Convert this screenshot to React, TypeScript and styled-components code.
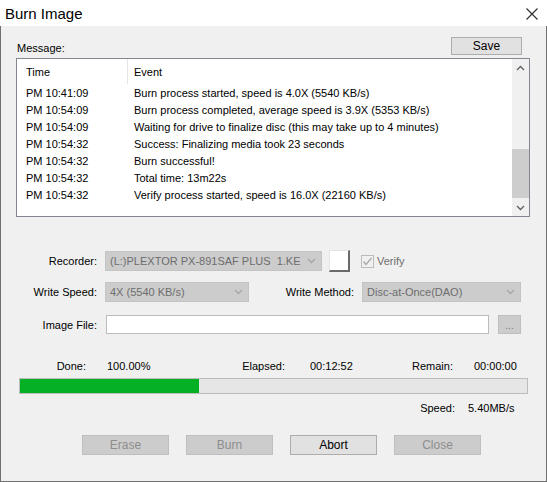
import * as React from 'react';
import styled, { createGlobalStyle } from 'styled-components';

const GlobalStyle = createGlobalStyle`
    html, body {
        margin: 0;
        padding: 0;
        background: #ffffff;
    }
    body {
        font-family: "Liberation Sans", Arial, sans-serif;
        font-size: 11px;
        color: #000;
    }
`;

const logRows = [
    ['PM 10:41:09', 'Burn process started, speed is 4.0X (5540 KB/s)'],
    ['PM 10:54:09', 'Burn process completed, average speed is 3.9X (5353 KB/s)'],
    ['PM 10:54:09', 'Waiting for drive to finalize disc (this may take up to 4 minutes)'],
    ['PM 10:54:32', 'Success: Finalizing media took 23 seconds'],
    ['PM 10:54:32', 'Burn successful!'],
    ['PM 10:54:32', 'Total time: 13m22s'],
    ['PM 10:54:32', 'Verify process started, speed is 16.0X (22160 KB/s)'],
];

const Chevron = ({ up, color }: { up?: boolean; color: string }) => (
    <svg width="9" height="6" viewBox="0 0 9 6">
        <polyline
            points={up ? '1,5 4.5,1.5 8,5' : '1,1 4.5,4.5 8,1'}
            fill="none"
            stroke={color}
            strokeWidth="1.3"
        />
    </svg>
);

const Select = ({ value, width }: { value: string; width: number }) => (
    <SelectBox $width={width}>
        <span>{value}</span>
        <Chevron color="#a6a6a6" />
    </SelectBox>
);

export default function App() {
    const progress = 0.353;
    return (
        <>
            <GlobalStyle />
            <Window>
                <TitleBar>
                    <Title>Burn Image</Title>
                    <CloseIcon width="12" height="12" viewBox="0 0 12 12">
                        <path d="M0.5 0.5 L11.5 11.5 M11.5 0.5 L0.5 11.5" stroke="#2b2b2b" strokeWidth="1.1" />
                    </CloseIcon>
                </TitleBar>
                <Body>
                    <MessageHeader>
                        <span>Message:</span>
                        <Button>Save</Button>
                    </MessageHeader>
                    <ListBox>
                        <Table>
                            <HeaderRow>
                                <TimeCell $header>Time</TimeCell>
                                <EventCell>Event</EventCell>
                            </HeaderRow>
                            {logRows.map(([time, event], i) => (
                                <Row key={i}>
                                    <TimeCell>{time}</TimeCell>
                                    <EventCell>{event}</EventCell>
                                </Row>
                            ))}
                        </Table>
                        <ScrollBar>
                            <ScrollButton><Chevron up color="#606060" /></ScrollButton>
                            <Track>
                                <Thumb $offset={73} $size={49} />
                            </Track>
                            <ScrollButton><Chevron color="#606060" /></ScrollButton>
                        </ScrollBar>
                    </ListBox>

                    <FormRow $top={33} $height={22}>
                        <Label $width={81}>Recorder:</Label>
                        <Select value="(L:)PLEXTOR PX-891SAF PLUS  1.KE" width={217} />
                        <ColorButton />
                        <CheckWrap>
                            <CheckBox>
                                <svg width="11" height="11" viewBox="0 0 11 11">
                                    <polyline points="1.5,5.5 4,8.5 9.5,2" fill="none" stroke="#a8a8a8" strokeWidth="1.3" />
                                </svg>
                            </CheckBox>
                            <DisabledText>Verify</DisabledText>
                        </CheckWrap>
                    </FormRow>
                    <FormRow $top={10} $height={20}>
                        <Label $width={81}>Write Speed:</Label>
                        <Select value="4X (5540 KB/s)" width={144} />
                        <Label $width={98}>Write Method:</Label>
                        <Select value="Disc-at-Once(DAO)" width={159} />
                    </FormRow>
                    <FormRow $top={13} $height={19}>
                        <Label $width={81}>Image File:</Label>
                        <TextInput />
                        <BrowseButton>...</BrowseButton>
                    </FormRow>

                    <StatRow $top={25}>
                        <StatLabel $width={70}>Done:</StatLabel>
                        <StatValue $width={114} $pad={21}>100.00%</StatValue>
                        <StatLabel $width={85}>Elapsed:</StatLabel>
                        <StatValue $width={105} $pad={25}>00:12:52</StatValue>
                        <StatLabel $width={63}>Remain:</StatLabel>
                        <StatValue $width={70} $pad={21}>00:00:00</StatValue>
                    </StatRow>
                    <ProgressBar>
                        <ProgressFill style={{ width: `${progress * 100}%` }} />
                    </ProgressBar>
                    <StatRow $top={7}>
                        <StatLabel $width={439}>Speed:</StatLabel>
                        <StatValue $width={70} $pad={13}>5.40MB/s</StatValue>
                    </StatRow>

                    <ButtonRow>
                        <ActionButton disabled>Erase</ActionButton>
                        <ActionButton disabled>Burn</ActionButton>
                        <ActionButton>Abort</ActionButton>
                        <ActionButton disabled>Close</ActionButton>
                    </ButtonRow>
                </Body>
            </Window>
        </>
    );
}

const Window = styled.div`
    width: 547px;
    height: 482px;
    display: flex;
    flex-direction: column;
    background: #ffffff;
`;

const TitleBar = styled.div`
    height: 26px;
    flex: none;
    display: flex;
    align-items: center;
    justify-content: space-between;
    padding: 0 9px 0 5px;
    background: #ffffff;
`;

const Title = styled.div`
    font-size: 15px;
    color: #000;
    padding-top: 1px;
`;

const CloseIcon = styled.svg`
    margin-top: 2px;
`;

const Body = styled.div`
    flex: 1;
    box-sizing: border-box;
    background: #f0f0f0;
    border: 1px solid #707070;
    border-top: none;
    padding: 0 16px 0 15px;
    display: flex;
    flex-direction: column;
`;

const MessageHeader = styled.div`
    height: 32px;
    box-sizing: border-box;
    display: flex;
    align-items: flex-end;
    justify-content: space-between;
    padding: 0 8px 3px 1px;
    line-height: 14px;
`;

const Button = styled.button`
    width: 71px;
    height: 18px;
    padding: 0;
    font: inherit;
    font-size: 12px;
    color: #000;
    background: #e1e1e1;
    border: 1px solid #adadad;
`;

const ListBox = styled.div`
    height: 159px;
    box-sizing: border-box;
    border: 1px solid #828790;
    background: #ffffff;
    display: flex;
`;

const Table = styled.div`
    flex: 1;
    display: flex;
    flex-direction: column;
`;

const HeaderRow = styled.div`
    height: 25px;
    display: flex;
    align-items: center;
`;

const Row = styled.div`
    height: 17px;
    display: flex;
    align-items: center;
`;

const TimeCell = styled.div<{ $header?: boolean }>`
    width: 111px;
    box-sizing: border-box;
    padding-left: 9px;
    align-self: stretch;
    display: flex;
    align-items: center;
    border-right: 1px solid ${p => (p.$header ? '#e5e5e5' : 'transparent')};
`;

const EventCell = styled.div`
    padding-left: 6px;
    white-space: nowrap;
`;

const ScrollBar = styled.div`
    width: 17px;
    background: #f0f0f0;
    display: flex;
    flex-direction: column;
`;

const ScrollButton = styled.div`
    height: 17px;
    display: flex;
    align-items: center;
    justify-content: center;
`;

const Track = styled.div`
    flex: 1;
`;

const Thumb = styled.div<{ $offset: number; $size: number }>`
    margin-top: ${p => p.$offset}px;
    height: ${p => p.$size}px;
    background: #cdcdcd;
`;

const FormRow = styled.div<{ $top: number; $height: number }>`
    margin-top: ${p => p.$top}px;
    height: ${p => p.$height}px;
    display: flex;
    align-items: center;
    gap: 7px;
`;

const Label = styled.div<{ $width: number }>`
    width: ${p => p.$width}px;
    text-align: right;
    flex: none;
    margin-right: 1px;
`;

const SelectBox = styled.div<{ $width: number }>`
    width: ${p => p.$width}px;
    height: 20px;
    box-sizing: border-box;
    flex: none;
    background: #cccccc;
    border: 1px solid #c4c4c4;
    color: #6d6d6d;
    display: flex;
    align-items: center;
    justify-content: space-between;
    padding: 0 5px 0 4px;
    white-space: pre;
    overflow: hidden;
`;

const ColorButton = styled.div`
    width: 21px;
    height: 22px;
    box-sizing: border-box;
    background: #ffffff;
    border-top: 1px solid #e3e3e3;
    border-left: 1px solid #e3e3e3;
    border-right: 2px solid #6a6a6a;
    border-bottom: 2px solid #6a6a6a;
`;

const CheckWrap = styled.div`
    display: flex;
    align-items: center;
    gap: 3px;
    margin-left: 4px;
`;

const CheckBox = styled.div`
    width: 13px;
    height: 13px;
    box-sizing: border-box;
    border: 1px solid #bcbcbc;
    background: #f0f0f0;
    display: flex;
    align-items: center;
    justify-content: center;
`;

const DisabledText = styled.span`
    color: #6d6d6d;
`;

const TextInput = styled.div`
    width: 383px;
    height: 19px;
    box-sizing: border-box;
    margin-left: 1px;
    background: #ffffff;
    border: 1px solid #bcbcbc;
`;

const BrowseButton = styled.div`
    width: 23px;
    height: 19px;
    box-sizing: border-box;
    margin-left: 2px;
    background: #cccccc;
    border: 1px solid #bfbfbf;
    color: #7a7a7a;
    font-size: 10px;
    line-height: 20px;
    text-align: center;
`;

const StatRow = styled.div<{ $top: number }>`
    margin-top: ${p => p.$top}px;
    height: 14px;
    line-height: 14px;
    display: flex;
    white-space: nowrap;
`;

const StatLabel = styled.div<{ $width: number }>`
    width: ${p => p.$width}px;
    text-align: right;
    flex: none;
`;

const StatValue = styled.div<{ $width: number; $pad: number }>`
    width: ${p => p.$width}px;
    box-sizing: border-box;
    padding-left: ${p => p.$pad}px;
    flex: none;
`;

const ProgressBar = styled.div`
    margin: 5px 0 0 3px;
    width: 509px;
    height: 16px;
    box-sizing: border-box;
    border: 1px solid #bcbcbc;
    background: #e6e6e6;
`;

const ProgressFill = styled.div`
    height: 100%;
    background: #06b025;
`;

const ButtonRow = styled.div`
    margin: 20px 0 0 66px;
    display: flex;
    gap: 17px;
`;

const ActionButton = styled.button`
    width: 87px;
    height: 20px;
    padding: 0;
    font: inherit;
    font-size: 12px;
    color: #000;
    background: #e1e1e1;
    border: 1px solid #adadad;

    &:disabled {
        color: #8d8d8d;
        background: #cccccc;
        border-color: #bfbfbf;
    }
`;
